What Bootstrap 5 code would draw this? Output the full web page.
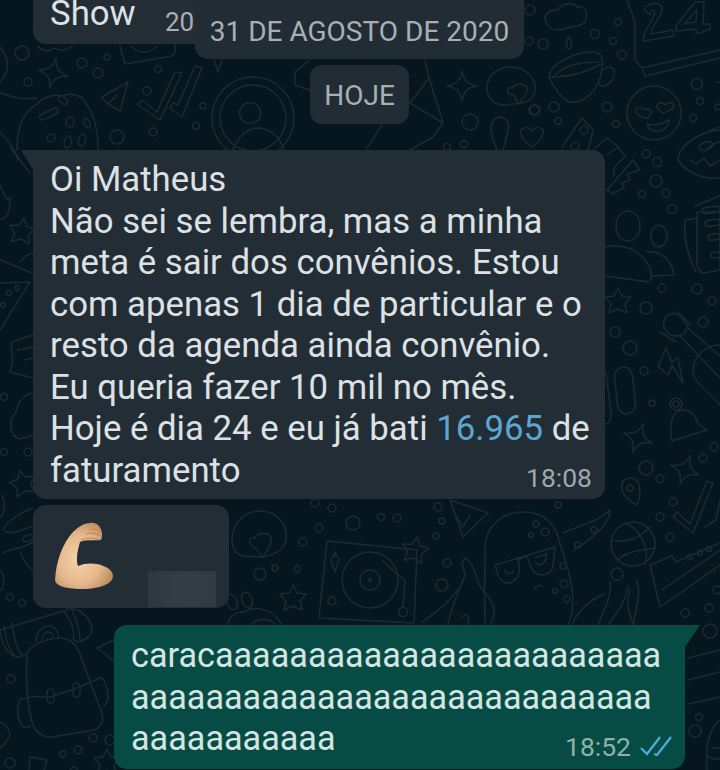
<!DOCTYPE html>
<html lang="pt">
<head>
  <meta charset="UTF-8">
  <title>Conversa</title>
  <link rel="stylesheet" href="https://cdn.jsdelivr.net/npm/bootstrap@5.3.0/dist/css/bootstrap.min.css">
  <style>
    html, body { height: 100%; }
    body {
      background: #06161e;
      font-family: Roboto, "Liberation Sans", sans-serif;
      overflow: hidden;
      margin: 0;
    }
    .chat-screen { height: 770px; overflow: hidden; }
    .doodles { position: absolute; top: 0; left: 0; width: 720px; height: 770px; }
    .doodles * { fill: none; stroke: #1b2b33; stroke-width: 1.5; stroke-linecap: round; stroke-linejoin: round; }
    .chat-flow { position: relative; padding: 0 20px 0 33px; margin-top: -20px; }
    .bubble {
      background: #232d36;
      color: #dde1e3;
      border-radius: 13px;
      font-size: 34.75px;
      line-height: 41.5px;
    }
    .bubble-show { width: 200px; height: 64px; padding: 13px 17px 0; }
    .show-time { font-size: 26px; color: #a9afb3; position: absolute; left: 165px; top: 29px; line-height: 1; }
    .date-pill {
      background: #222c34;
      color: #a9afb3;
      border-radius: 12px;
      font-size: 28px;
      line-height: 1;
      text-align: center;
    }
    .date-old { position: absolute; left: 195px; top: 0; width: 329px; height: 59px; padding-top: 18px; border-radius: 0 0 13px 13px; }
    .date-today { width: 99px; height: 59px; padding-top: 17px; margin: 21px 0 0 277px; }
    .bubble-in { width: 572px; height: 349px; margin-top: 26px; padding: 9px 5px 0 17px; position: relative; border-top-left-radius: 0; }
    .bubble-in::before {
      content: "";
      position: absolute; left: -12px; top: 0;
      border-top: 20px solid #232d36;
      border-left: 12px solid transparent;
    }
    .phone-link { color: #5ba7d1; }
    .msg-time { position: absolute; right: 13px; bottom: 5px; font-size: 26.5px; line-height: 1.2; color: #a0a7ab; }
    .bubble-emoji { width: 196px; height: 103px; margin-top: 6px; position: relative; }
    .emoji-arm { position: absolute; left: 21px; top: 17px; }
    .blur-patch { position: absolute; left: 115px; top: 66px; width: 68px; height: 36px; background: linear-gradient(90deg, #2d373f, #333d45 45%, #313b43); }
    .bubble-out {
      width: 571px; height: 144px; margin: 17px 0 0 81px;
      padding: 10px 5px 0 17px;
      position: relative;
      background: #064c44;
      color: #d5e5e1;
      font-size: 34.2px;
      border-top-right-radius: 0;
    }
    .bubble-out::after {
      content: "";
      position: absolute; right: -15px; top: 0;
      border-top: 22px solid #064c44;
      border-right: 15px solid transparent;
    }
    .out-meta { position: absolute; left: 451px; top: 106px; font-size: 26.5px; line-height: 1.2; color: #8fb1ab; }
    .ticks { position: absolute; left: 526px; top: 111px; }
  </style>
</head>
<body>
  <div class="chat-screen position-relative">
    <svg class="doodles" viewBox="0 0 720 770" aria-hidden="true">
      <defs>
        <path id="star4" d="M0-15C2-5 5-2 15 0 5 2 2 5 0 15-2 5-5 2-15 0-5-2-2-5 0-15Z"/>
        <path id="star5" d="M0-13 4-5 13-4 7 3 9 12 0 8-9 12-7 3-13-4-4-5Z"/>
      </defs>

      <!-- topo esquerdo -->
      <path d="M0 47C10 60 10 70 0 83M38 46C42 52 50 52 54 48 60 52 68 50 72 46"/>
      <use href="#star4" x="53" y="73" transform="rotate(12 53 73)"/>
      <circle cx="22" cy="53" r="7"/><circle cx="28" cy="82" r="4"/><circle cx="82" cy="63" r="5"/><circle cx="107" cy="57" r="3"/>
      <circle cx="98" cy="73" r="5"/><circle cx="158" cy="69" r="3.5"/><circle cx="147" cy="91" r="4"/><circle cx="153" cy="132" r="4"/>
      <circle cx="203" cy="106" r="3"/><circle cx="196" cy="126" r="3.5"/><circle cx="117" cy="137" r="7"/>
      <path d="M120 46 125 64 172 56C175 55 176 48 175 44M132 46C136 54 152 54 156 46"/>
      <path d="M128 82 102 97 108 104 120 111 128 82ZM117 95 108 104"/>
      <path d="M138 105 160 120 182 73 175 72 157 112 142 100Z"/>
      <path d="M170 108 182 117 202 68 195 66 178 105 173 103Z"/>
      <circle cx="253" cy="118" r="41"/><circle cx="253" cy="118" r="33"/><circle cx="250" cy="113" r="10.5"/>
      <path d="M233 150C238 134 250 128 258 128 268 128 280 136 284 150"/>
      <path d="M214 60 218 72 222 60M310 60 295 72V85L310 90"/>
      <path d="M0 93C14 98 24 100 37 98"/>
      <path d="M17 150C17 125 24 112 37 104 44 96 56 94 62 96 72 92 84 96 86 104 94 114 98 130 98 150"/>
      <rect x="39" y="111" width="20" height="6" rx="3" transform="rotate(-25 49 114)"/>
      <rect x="58" y="97" width="10" height="6" rx="3" transform="rotate(40 63 100)"/>
      <ellipse cx="70" cy="122" rx="4" ry="5"/><ellipse cx="87" cy="123" rx="3" ry="5" transform="rotate(-25 87 123)"/>
      <ellipse cx="51" cy="138" rx="4" ry="4"/><ellipse cx="68" cy="142" rx="3.5" ry="6" transform="rotate(15 68 142)"/><ellipse cx="82" cy="140" rx="3.5" ry="6" transform="rotate(15 82 140)"/>

      <!-- topo centro -->
      <path d="M425 60 429 78 410 103M429 78 443 123 433 137 410 150M410 103 443 123M367 148 398 100"/>
      <use href="#star4" x="462" y="86"/>
      <path d="M487 88C487 74 500 66 512 67 528 68 536 80 535 90 534 98 528 102 522 103L505 105C496 105 487 100 487 88Z"/>
      <path d="M514 95C505 95 506 86 512 88 516 82 526 84 527 88 528 94 522 100 518 104Z"/>
      <circle cx="470" cy="122" r="8"/><circle cx="535" cy="110" r="5"/><circle cx="554" cy="107" r="5"/><circle cx="558" cy="121" r="3.5"/><circle cx="464" cy="144" r="3.5"/><circle cx="447" cy="147" r="3.5"/>
      <path d="M500 117C494 117 490 124 491 130 492 138 495 145 497 150M500 117C508 117 510 125 507 135L503 150"/>
      <path d="M532 147C522 140 518 132 522 129 526 126 530 128 532 131 535 127 540 126 543 130 545 136 538 142 532 147Z"/>
      <path d="M562 147 582 118 593 130 588 150"/><circle cx="584" cy="130" r="4"/><circle cx="575" cy="146" r="4"/>
      <path d="M595 148 607 138 620 148"/>

      <!-- topo direito -->
      <path d="M545 19C545 12 553 9 558 10 561 3 573 2 577 7 584 5 588 11 586 18 586 25 578 26 570 27 560 31 547 32 545 19Z"/>
      <path d="M569 36C566 42 565 48 569 49 573 48 572 42 569 36Z"/>
      <circle cx="530" cy="10" r="5"/><circle cx="529" cy="41" r="4"/><circle cx="543" cy="44" r="5"/><circle cx="595" cy="34" r="4.5"/><circle cx="618" cy="22" r="3.5"/><circle cx="613" cy="41" r="3.5"/><circle cx="622" cy="55" r="4.5"/>
      <circle cx="697" cy="84" r="5.5"/><circle cx="700" cy="101" r="3.5"/><circle cx="693" cy="118" r="3.5"/><circle cx="718" cy="107" r="3"/><circle cx="534" cy="110" r="5"/><circle cx="607" cy="107" r="5"/><circle cx="616" cy="124" r="3.5"/>
      <path d="M549 77C548 66 572 52 592 52 602 52 604 60 602 68"/>
      <path d="M549 77C570 78 590 70 601 64M553 78C560 68 576 62 598 62"/>
      <path d="M549 77C554 88 562 98 569 102 584 104 600 90 602 68"/>
      <path d="M603 70C612 62 618 72 612 80 608 86 600 88 599 84"/>
      <circle cx="654" cy="113" r="27"/>
      <path d="M648 118C640 118 634 112 636 109 639 106 643 108 644 110 647 107 652 110 651 113ZM662 113C658 110 655 106 658 104 661 102 664 104 665 105 668 102 673 102 674 105 674 109 668 112 662 113ZM647 124C654 126 662 124 669 120 668 128 662 132 656 131 651 131 648 128 647 124Z"/>
      <path d="M627 0 635 22V60M635 60 642 68 720 50M642 68 645 76 720 58"/>
      <path d="M644 10C646 3 660 1 662 8 664 14 652 24 651 34L673 30 674 36 643 41C644 28 654 20 655 12 652 8 650 12 650 15Z"/>
      <path d="M676 26 695 2H704L703 24H710V29L703 31 702 33H696L696 29 676 31ZM684 24 696 22 697 10Z"/>
      <path d="M717 82H720M682 150C688 140 702 133 720 127"/>
      <path d="M706 150C712 144 718 142 720 142"/>

      <!-- lateral direita -->
      <path d="M607 155 618 147 625 156 614 168 614 176M607 190 633 160 640 170 627 174 630 180 622 183 624 188 612 194Z"/>
      <path d="M678 160C678 148 692 136 712 131 718 130 720 130 720 130M678 160C684 170 700 180 720 178M690 160 696 164 704 158 710 166 720 160"/>
      <ellipse cx="706" cy="146" rx="7" ry="4" transform="rotate(-20 706 146)"/>
      <circle cx="646" cy="154" r="4"/><circle cx="657" cy="162" r="4.5"/><circle cx="656" cy="181" r="6"/><circle cx="642" cy="194" r="3.5"/><circle cx="666" cy="193" r="4"/><circle cx="672" cy="209" r="4.5"/>
      <ellipse cx="628" cy="226" rx="12" ry="15"/><path d="M605 247C620 243 640 248 650 268 652 274 652 278 650 282L605 276"/>
      <ellipse cx="659" cy="236" rx="8" ry="11"/><path d="M647 252C660 250 672 260 674 275L652 276"/>
      <path d="M695 206 720 196M697 212H720V270L704 273C700 273 697 268 697 262Z" />
      <path d="M685 220 698 218M685 220C683 240 690 260 696 272"/>
      <rect x="702" y="207" width="18" height="6" rx="3" transform="rotate(-8 711 210)"/>
      <rect x="705" y="220" width="15" height="6" rx="3" transform="rotate(-8 711 223)"/>
      <rect x="708" y="234" width="12" height="6" rx="3" transform="rotate(-8 714 237)"/>
      <rect x="711" y="252" width="9" height="6" rx="3" transform="rotate(-8 716 255)"/>
      <use href="#star5" x="618" y="301"/>
      <circle cx="646" cy="308" r="6"/><circle cx="662" cy="288" r="4"/><circle cx="697" cy="289" r="5"/><circle cx="712" cy="301" r="4"/><circle cx="703" cy="322" r="5"/><circle cx="615" cy="332" r="5"/><circle cx="630" cy="348" r="7"/><circle cx="644" cy="371" r="4"/><circle cx="652" cy="403" r="3"/>
      <path d="M664 320C668 312 676 312 680 316L688 326 684 334 676 336C668 336 662 328 664 320ZM680 336 720 378M688 328 720 356"/>
      <path d="M678 312 690 324M660 332 676 342"/>
      <path d="M720 345C705 345 694 356 693 370 692 380 704 388 720 405"/>
      <path d="M666 348 658 366 668 375 672 365 683 383 678 358 672 362Z"/>
      <rect x="616" y="367" width="18" height="47" rx="9" transform="rotate(-6 625 390)"/>
      <path d="M606 373 611 412C612 420 608 425 604 424"/>
      <circle cx="676" cy="404" r="3"/><circle cx="676" cy="404" r="6"/>
      <path d="M680 410C690 408 696 416 698 424L707 430 672 441C670 430 669 415 680 410Z"/>
      <use href="#star4" x="638" y="438" transform="rotate(20 638 438)"/>
      <use href="#star4" x="685" y="470" transform="rotate(20 685 470)"/>
      <circle cx="703" cy="458" r="4"/><circle cx="714" cy="447" r="4"/><circle cx="646" cy="468" r="7"/><circle cx="660" cy="479" r="4"/><circle cx="673" cy="502" r="4"/><circle cx="660" cy="517" r="4"/><circle cx="670" cy="537" r="4"/>
      <path d="M622 484C624 476 636 476 639 484 641 492 639 500 637 505 630 502 620 494 622 484Z"/><circle cx="630" cy="488" r="3"/>
      <path d="M673 517 693 533 713 483 707 481 690 524 677 512Z"/>
      <path d="M705 527 716 520 720 500"/>
      <circle cx="633" cy="544" r="22"/><path d="M626 523C640 530 650 548 645 564M612 540C625 544 640 538 650 527M618 560C625 552 640 550 655 548"/>
      <path d="M650 565 672 556 676 562 720 543M650 565 660 607 720 565M662 590 720 550"/>
      <circle cx="690" cy="557" r="2.5"/><circle cx="700" cy="553" r="2.5"/><circle cx="709" cy="549" r="2.5"/>
      <circle cx="685" cy="613" r="4"/><circle cx="709" cy="608" r="4"/><circle cx="710" cy="631" r="7"/><circle cx="699" cy="717" r="3.5"/><circle cx="695" cy="731" r="6"/>
      <circle cx="717" cy="590" r="4"/>
      <path d="M688 658 720 650M688 680 720 672M688 704 720 697"/>
      <path d="M707 770C705 745 710 728 720 720M712 748H720M708 756C712 760 716 760 720 758"/>
      <path d="M633 625C636 608 642 590 636 580M608 625C618 612 626 600 628 586"/>

      <!-- lacuna central -->
      <circle cx="438" cy="507" r="4"/><circle cx="442" cy="521" r="3"/><circle cx="436" cy="536" r="3"/><circle cx="447" cy="563" r="4"/><circle cx="442" cy="585" r="6"/>
      <circle cx="332" cy="508" r="4"/><circle cx="315" cy="503" r="4"/><circle cx="353" cy="523" r="7"/><circle cx="319" cy="528" r="4"/><circle cx="303" cy="542" r="4"/>
      <circle cx="381" cy="517" r="3.5"/><circle cx="397" cy="518" r="4"/><circle cx="260" cy="574" r="6"/><circle cx="275" cy="568" r="3"/><circle cx="297" cy="569" r="3"/>
      <circle cx="558" cy="505" r="3"/><circle cx="536" cy="524" r="3"/><circle cx="531" cy="535" r="2.5"/><circle cx="545" cy="532" r="4"/><circle cx="563" cy="566" r="3"/><circle cx="564" cy="584" r="4"/><circle cx="555" cy="591" r="2.5"/><circle cx="567" cy="599" r="3"/><circle cx="617" cy="574" r="6"/>
      <path d="M232 540C232 522 246 510 262 511 278 512 288 526 286 540 284 552 270 556 262 557L245 556C238 556 232 550 232 540Z"/>
      <path d="M255 548C247 544 249 536 255 538 258 532 270 532 271 538 272 546 266 552 263 557Z"/>
      <path d="M327 541 417 550 414 623 319 618Z"/>
      <circle cx="370" cy="580" r="28"/><circle cx="370" cy="580" r="10"/><circle cx="370" cy="580" r="1.5"/>
      <path d="M386 564 405 581 403 607M391 569 382 560 386 564"/>
      <circle cx="403" cy="612" r="4.5"/><circle cx="332" cy="601" r="4"/>
      <path d="M335 552 331 560 335 572 339 560ZM333 556H337"/>
      <use href="#star5" x="415" y="550" transform="rotate(10 415 550)"/>
      <use href="#star5" x="293" y="598"/>
      <ellipse cx="232" cy="602" rx="5" ry="8" transform="rotate(-20 232 602)"/><ellipse cx="247" cy="600" rx="5" ry="8" transform="rotate(-20 247 600)"/>
      <path d="M228 625C230 612 240 612 245 612 250 606 272 606 282 625M252 625C254 618 272 618 276 625"/>
      <path d="M450 500 488 513 463 537ZM470 515 463 527 455 514"/>
      <path d="M465 558C470 560 476 572 478 582 482 592 492 598 494 608 495 615 492 622 490 625M465 558 462 562 465 575C463 590 440 610 422 622M465 575C456 598 450 610 448 625M462 618C466 610 470 618 468 625"/>
      <path d="M485 625C484 590 485 570 485 547 486 525 503 512 523 512 542 512 552 522 557 533 562 552 570 570 572 590 574 606 572 616 568 625"/>
      <path d="M495 565 555 547 553 566C552 574 540 578 534 572 530 568 529 560 527 556L518 560C520 568 520 578 512 582 504 586 498 578 497 572Z"/>
      <path d="M505 570C507 576 512 574 514 570M535 558 546 554C548 562 540 568 535 562"/>
      <path d="M534 590C536 586 540 584 542 586"/>
      <path d="M563 533C585 524 600 520 610 510 610 525 590 540 574 550"/>
      <circle cx="578" cy="545" r="3"/><circle cx="594" cy="530" r="3"/>
      <path d="M572 625C578 610 590 600 604 594M598 625C604 610 612 596 610 582M634 625C628 612 626 604 630 590"/>

      <!-- lateral esquerda -->
      <path d="M0 132C8 140 16 150 18 160M10 147 30 173"/>
      <path d="M0 185C5 195 8 205 10 197M0 220C8 218 10 212 10 197"/>
      <use href="#star5" x="22" y="231" transform="rotate(8 22 231)"/>
      <path d="M0 260 32 273M20 262C24 256 28 254 33 253"/>
      <path d="M0 283 30 282 0 330"/>
      <circle cx="9" cy="293" r="2.5"/><circle cx="17" cy="288" r="2.5"/><circle cx="3" cy="305" r="2.5"/>
      <path d="M33 335C24 338 14 340 11 343 12 352 14 360 10 372L33 378M18 350 33 347M24 360 33 358"/>
      <path d="M33 393C24 394 18 402 16 412 8 420 9 436 20 439L33 435"/>
      <circle cx="4" cy="397" r="3.5"/><circle cx="4" cy="452" r="3.5"/><circle cx="28" cy="452" r="4"/>
      <use href="#star5" x="23" y="483" transform="rotate(-15 23 483)"/>
      <path d="M2 495C6 505 4 515 0 518"/>
      <path d="M33 508C22 512 8 520 3 530 10 536 22 530 33 526"/>
      <ellipse cx="28" cy="538" rx="6" ry="3" transform="rotate(-20 28 538)"/>
      <path d="M3 553C10 548 20 550 33 542M20 552C26 566 30 568 33 570M0 570C6 575 4 590 0 590"/>
      <circle cx="10" cy="597" r="3.5"/><circle cx="22" cy="603" r="3.5"/>

      <!-- mochila -->
      <path d="M0 630 60 612 68 610M0 630C2 645 8 655 18 657 22 657 27 653 30 650M4 626C6 640 8 648 14 655M12 623C14 636 16 648 22 655"/>
      <path d="M66 608 78 610C88 616 94 625 91 634 86 640 78 644 74 640M72 610C76 620 80 630 80 640M64 612C72 620 74 630 74 640"/>
      <path d="M36 642C36 630 44 626 48 626 56 626 60 634 58 638M42 640C42 634 46 632 48 632 52 632 54 636 53 638"/>
      <path d="M27 653C32 644 48 638 60 638 70 638 76 644 80 654L90 682 102 713C104 722 100 728 94 730L52 737C42 738 34 730 32 722 26 700 26 675 27 653Z"/>
      <path d="M20 700C28 696 40 696 50 697L77 688 100 678M20 700C16 706 18 720 22 726 24 728 28 728 30 726"/>
      <path d="M100 678C104 676 108 690 108 697 108 702 106 704 104 706"/>
      <rect x="47" y="689" width="7" height="14" rx="3.5"/><rect x="73" y="683" width="7" height="14" rx="3.5"/>
      <circle cx="11" cy="679" r="4"/><circle cx="10" cy="763" r="5"/><circle cx="63" cy="754" r="3"/><circle cx="78" cy="750" r="4"/><circle cx="93" cy="738" r="4"/>
      <path d="M0 722C6 724 10 730 10 736 6 744 2 746 0 748M29 770 30 757 47 760 44 770"/>
      <use href="#star5" x="107" y="762"/>
      <path d="M97 648 114 640M114 662 108 656 97 648"/>
      <circle cx="110" cy="740" r="5"/>
      <path d="M70 770C72 766 76 766 78 770"/>
    </svg>

    <div class="chat-flow">
      <div class="bubble bubble-show">Show</div>
      <span class="show-time">20</span>
      <div class="date-pill date-today">HOJE</div>
      <div class="bubble bubble-in">Oi Matheus<br>Não sei se lembra, mas a minha<br>meta é sair dos convênios. Estou<br>com apenas 1 dia de particular e o<br>resto da agenda ainda convênio.<br>Eu queria fazer 10 mil no mês.<br>Hoje é dia 24 e eu já bati <span class="phone-link">16.965</span> de<br>faturamento
        <span class="msg-time">18:08</span>
      </div>
      <div class="bubble bubble-emoji">
        <svg class="emoji-arm" width="60" height="68" viewBox="0 0 60 68" aria-hidden="true">
          <defs>
            <radialGradient id="skin" cx="0.42" cy="0.55" r="0.62">
              <stop offset="0" stop-color="#f4d2ac"/><stop offset="0.6" stop-color="#e6b98d"/><stop offset="1" stop-color="#c08a5c"/>
            </radialGradient>
          </defs>
          <path d="M1 58C2 40 8 22 19 10 24 5 30 1 36 1 42 0 47 4 48 11 48 15 48 18 46 18 40 19 32 17 26 20 23 30 22 38 24 44 30 41 38 41 43 42 52 44 59 48 59 54 59 62 45 67 29 67 15 67 2 65 1 58Z" fill="url(#skin)"/>
          <path d="M35 8C40 6 45 8 47 11M32 12C38 10 44 12 48 15M27 18C33 15 40 16 46 18" fill="none" stroke="#b98355" stroke-width="1"/>
        </svg>
        <div class="blur-patch"></div>
      </div>
      <div class="bubble bubble-out">caracaaaaaaaaaaaaaaaaaaaaaaaa<br>aaaaaaaaaaaaaaaaaaaaaaaaaaaa<br>aaaaaaaaaaa
        <span class="out-meta">18:52</span>
        <svg class="ticks" width="32" height="20" viewBox="0 0 32 20" aria-hidden="true">
          <path d="M1 12 7 18 20 1M14 18 17 19 31 1" fill="none" stroke="#45afe0" stroke-width="2.2"/>
        </svg>
      </div>
    </div>
    <div class="date-pill date-old">31 DE AGOSTO DE 2020</div>
  </div>
  <script src="https://cdn.jsdelivr.net/npm/bootstrap@5.3.0/dist/js/bootstrap.bundle.min.js"></script>
</body>
</html>
